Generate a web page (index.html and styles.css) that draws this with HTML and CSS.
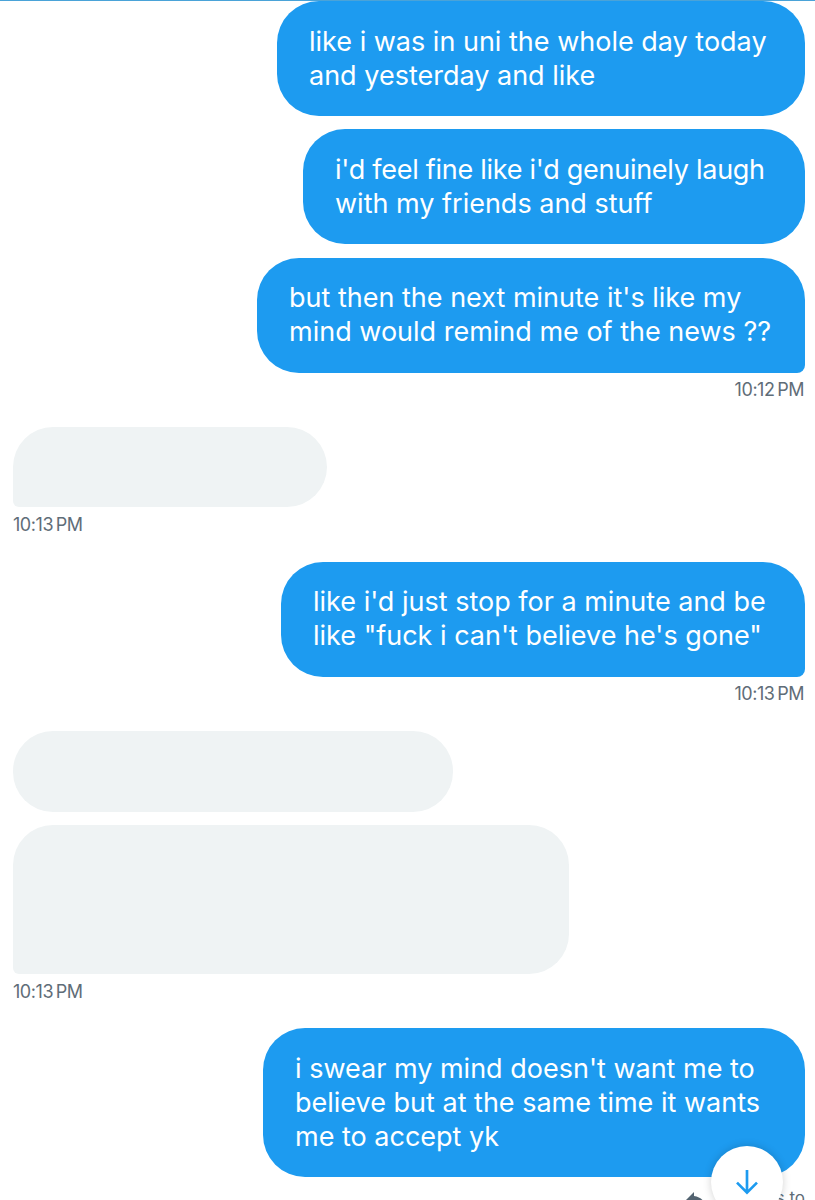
FILE: index.html
```html
<!DOCTYPE html>
<html>
<head>
  <title>Messages</title>
  <link rel="stylesheet" href="styles.css">
</head>
<body>

  <div class="thread">
    <div class="msg out w-528">like i was in uni the whole day today<br>and yesterday and like</div>
    <div class="msg out w-502"><span class="tight">i'd feel fine like i'd genuinely laugh</span><br>with my friends and stuff</div>
    <div class="msg out last w-548">but then the next minute it's like my<br>mind would remind me of the news ??</div>
    <div class="time out-time">10:12 PM</div>

    <div class="msg in last blank-1"></div>
    <div class="time">10:13 PM</div>

    <div class="msg out last w-524">like i'd just stop for a minute and be<br>like "fuck i can't believe he's gone"</div>
    <div class="time out-time">10:13 PM</div>

    <div class="msg in blank-2"></div>
    <div class="msg in last blank-3"></div>
    <div class="time">10:13 PM</div>

    <div class="msg out w-542">i swear my mind doesn't want me to<br>believe but at the same time it wants<br>me to accept yk</div>
  </div>

  <div class="reply-hint">
    <svg class="reply-icon" viewBox="0 0 24 24"><path d="M10 4 2 12l8 8v-5c5 0 9 1 12 5-1-7-5-11-12-12z"/></svg>
    <span class="hint-text">s to</span>
  </div>

  <button class="scroll-down">
    <svg viewBox="0 0 24 24"><path d="M12 3v17M4.500 12.500 12 20l7.500-7.500"/></svg>
  </button>

</body>
</html>
```

FILE: styles.css
```css
html, body {
  margin: 0;
  height: 1200px;
  overflow: hidden;
}

body {
  position: relative;
  box-sizing: border-box;
  border-top: 1px solid #4aa3d8;
  background: #fff;
  color: #5f6d78;
  font-family: Inter, "Liberation Sans", sans-serif;
}

.thread {
  display: flex;
  flex-direction: column;
  align-items: flex-start;
  padding: 0 10px 0 13px;
}

.msg {
  box-sizing: border-box;
  margin-bottom: 13.25px;
  padding: 23.5px 0 23.5px 32px;
  border-radius: 42px;
  font-size: 27px;
  line-height: 34px;
  white-space: nowrap;
}

.out {
  align-self: flex-end;
  background: #1d9bf0;
  color: #fff;
}

.in {
  background: #eff3f4;
  border-radius: 40px;
}

.out.last {
  border-bottom-right-radius: 8px;
}

.in.last {
  border-bottom-left-radius: 6px;
}

.tight {
  letter-spacing: -0.27px;
}

.w-502 { width: 502px; }
.w-524 { width: 524px; }
.w-528 { width: 528px; }
.w-542 { width: 542px; }
.w-548 { width: 548px; }

.blank-1 {
  width: 314px;
  height: 80.5px;
}

.blank-2 {
  width: 440px;
  height: 81px;
}

.blank-3 {
  width: 556px;
  height: 149px;
}

.time {
  margin: -5.5px 0 26.5px;
  font-size: 18px;
  line-height: 20px;
  letter-spacing: -0.45px;
  word-spacing: -2px;
}

.out-time {
  align-self: flex-end;
  margin-right: 1px;
}

.scroll-down {
  position: absolute;
  left: 711px;
  top: 1145px;
  display: flex;
  align-items: center;
  justify-content: center;
  width: 72px;
  height: 72px;
  padding: 0;
  border: 0;
  border-radius: 50%;
  background: #fff;
  box-shadow: 0 0 8px rgba(0, 0, 0, 0.18);
}

.scroll-down svg {
  width: 32px;
  height: 32px;
  fill: none;
  stroke: #1d9bf0;
  stroke-width: 2;
}

.reply-hint {
  position: absolute;
  left: 684px;
  right: 10px;
  top: 1187px;
  display: flex;
  justify-content: space-between;
  align-items: flex-start;
}

.reply-icon {
  width: 24px;
  height: 24px;
  fill: #536471;
}

.hint-text {
  font-size: 17px;
  line-height: 20px;
}
```
